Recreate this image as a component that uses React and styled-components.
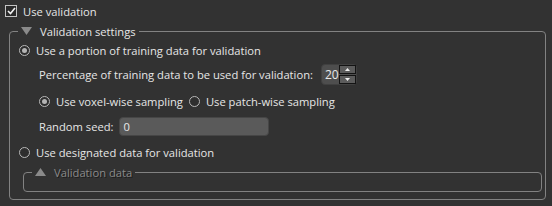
import React from "react";
import styled, { createGlobalStyle } from "styled-components";

const Global = createGlobalStyle`
  html, body { margin: 0; padding: 0; background: #323232; }
  body {
    width: 552px; height: 206px; overflow: hidden;
    font-family: "Open Sans", "Liberation Sans", Arial, sans-serif;
    font-size: 11.2px; color: #e6e6e6;
  }
`;

const Page = styled.div`
  padding: 4px 6px 0 5px;
  display: flex;
  flex-direction: column;
`;

const Row = styled.div`
  display: flex;
  align-items: center;
  height: ${(p) => p.$h || 14}px;
  margin-top: ${(p) => p.$mt || 0}px;
  padding-left: ${(p) => p.$pl || 0}px;
  white-space: nowrap;
`;

const Box = styled.span`
  width: 10px;
  height: 10px;
  border: 1px solid #c4c4c4;
  background: #2a2a2a;
  display: inline-flex;
  align-items: center;
  justify-content: center;
  margin-right: 6px;
  flex: none;
`;

const RadioRing = styled.span`
  width: 9px;
  height: 9px;
  border-radius: 50%;
  border: 1.5px solid #b8b8b8;
  background: #2e2e2e;
  display: inline-flex;
  align-items: center;
  justify-content: center;
  margin-right: 6px;
  flex: none;
  &::after {
    content: "";
    display: ${(p) => (p.$on ? "block" : "none")};
    width: 5px;
    height: 5px;
    border-radius: 50%;
    background: #b4b4b4;
  }
`;

const Group = styled.fieldset`
  margin: ${(p) => p.$m};
  padding: 0 0 ${(p) => p.$pb}px 0;
  border: 1px solid #828282;
  border-radius: 4px;
  min-width: 0;
  display: flex;
  flex-direction: column;
`;

const Legend = styled.legend`
  margin-left: 8px;
  padding: 0 3px 0 3px;
  height: 14px;
  display: flex;
  align-items: center;
  gap: 8px;
  color: ${(p) => (p.$disabled ? "#8a8a8a" : "#e6e6e6")};
  text-shadow: ${(p) => (p.$disabled ? "1px 1px 0 #1a1a1a" : "none")};
`;

const Spin = styled.span`
  display: inline-flex;
  align-items: center;
  width: 36px;
  height: 21px;
  box-sizing: border-box;
  border-radius: 4px;
  background: #4e4e4e;
  border: 1px solid #404040;
  padding: 0 2px 0 3px;
  margin-left: 8px;
  color: #e8e8e8;
  font-size: 12px;
`;

const SpinVal = styled.span`
  flex: 1;
`;

const SpinBtns = styled.span`
  display: flex;
  flex-direction: column;
  gap: 1px;
`;

const SpinBtn = styled.span`
  width: 15px;
  height: 7px;
  border: 1px solid #141414;
  background: #5c5c5c;
  display: flex;
  align-items: center;
  justify-content: center;
`;

const Input = styled.span`
  width: 150px;
  height: 19px;
  box-sizing: border-box;
  border-radius: 4px;
  background: #5a5a5a;
  border: 1px solid #464646;
  margin-left: 5px;
  padding-left: 4px;
  display: flex;
  align-items: center;
  color: #e8e8e8;
`;

const Gap = styled.span`
  width: ${(p) => p.$w}px;
  flex: none;
`;

const Tri = ({ up }) => (
  <svg width="11" height="8" viewBox="0 0 11 8">
    <polygon points={up ? "5.5,0 11,8 0,8" : "0,0 11,0 5.5,8"} fill="#8a8a8a" />
  </svg>
);

const Check = () => (
  <svg width="9" height="8" viewBox="0 0 9 8">
    <polyline points="1,4 3.5,6.5 8,1" fill="none" stroke="#f2f2f2" strokeWidth="1.6" />
  </svg>
);

const Arrow = ({ up }) => (
  <svg width="5" height="3" viewBox="0 0 5 3">
    <polygon points={up ? "2.5,0 5,3 0,3" : "0,0 5,0 2.5,3"} fill="#f0f0f0" />
  </svg>
);

export default function App() {
  return (
    <>
      <Global />
      <Page>
        <Row>
          <Box>
            <Check />
          </Box>
          Use validation
        </Row>
        <Group $m="6px 0 0 4px" $pb={7}>
          <Legend>
            <Tri />
            Validation settings
          </Legend>
          <Row $mt={5} $pl={9}>
            <RadioRing $on />
            Use a portion of training data for validation
          </Row>
          <Row $mt={6} $h={22} $pl={29}>
            Percentage of training data to be used for validation:
            <Spin>
              <SpinVal>20</SpinVal>
              <SpinBtns>
                <SpinBtn>
                  <Arrow up />
                </SpinBtn>
                <SpinBtn>
                  <Arrow />
                </SpinBtn>
              </SpinBtns>
            </Spin>
          </Row>
          <Row $mt={9} $pl={29}>
            <RadioRing $on />
            Use voxel-wise sampling
            <Gap $w={6} />
            <RadioRing />
            Use patch-wise sampling
          </Row>
          <Row $mt={9} $h={19} $pl={29}>
            Random seed:
            <Input>0</Input>
          </Row>
          <Row $mt={9} $pl={9}>
            <RadioRing />
            Use designated data for validation
          </Row>
          <Group $m="6px 3px 0 13px" $pb={12}>
            <Legend $disabled>
              <Tri up />
              Validation data
            </Legend>
          </Group>
        </Group>
      </Page>
    </>
  );
}
